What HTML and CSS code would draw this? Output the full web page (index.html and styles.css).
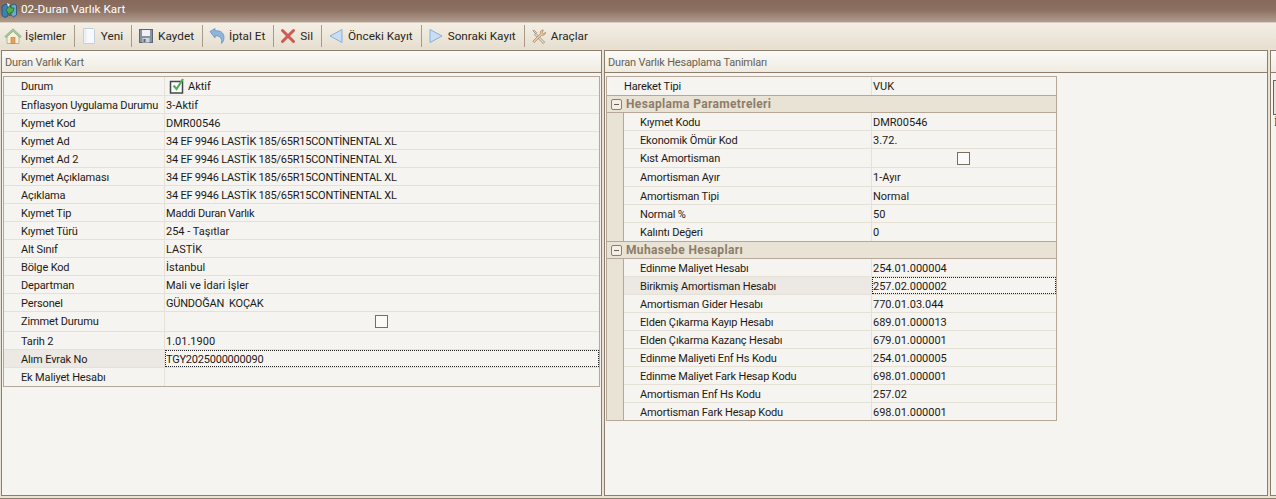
FILE: index.html
```html
<!DOCTYPE html>
<html lang="tr">
<head>
  <meta charset="UTF-8" />
  <title>02-Duran Varlık Kart</title>
  <link rel="stylesheet" href="styles.css">
</head>
<body>

  <!-- Title bar -->
  <header class="titlebar">
    <svg class="app-icon" width="16" height="16" viewBox="0 0 16 16">
      <path d="M1 4l4-2 2 2v10l-3 1.500-3-2z" fill="#3f7fb5" stroke="#24506f" stroke-width=".8" />
      <path d="M10 3l4-1 1.500 2v9l-3 2-2.500-2z" fill="#6fa8cf" stroke="#24506f" stroke-width=".8" />
      <path d="M5 8l4-5 1 3h3l-1 4-3 1v3z" fill="#4fae4a" stroke="#1f5f2a" stroke-width=".7" />
      <path d="M6 1l3 1.500L7 5z" fill="#e8f0f4" />
    </svg>
    <span>02-Duran Varlık Kart</span>
  </header>

  <!-- Toolbar -->
  <nav class="toolbar">
    <a class="tool tool-first">
      <svg width="18" height="18" viewBox="0 0 18 18">
        <path d="M3 9v7.500h12V9L9 3.500z" fill="#f6efdc" stroke="#b3b39a" />
        <path d="M.8 9.500L9 1.800l8.200 7.700-1.300 1L9 4.300 2.100 10.500z" fill="#a9cf9a" stroke="#7fa37a" stroke-width=".7" />
        <rect x="7" y="10.500" width="4" height="6" fill="#e5a257" stroke="#b97f3c" stroke-width=".6" />
      </svg>
      İşlemler
    </a>
    <a class="tool">
      <svg width="16" height="18" viewBox="0 0 16 18">
        <path d="M2.500 1.500h10l1 1v14h-11z" fill="#f7f9fc" stroke="#c3cedc" />
        <path d="M3.500 2.500h2v13h-2z" fill="#e6edf5" />
      </svg>
      Yeni
    </a>
    <a class="tool">
      <svg width="16" height="16" viewBox="0 0 16 16">
        <rect x="1.500" y="1.500" width="13" height="13" fill="#8893a1" stroke="#5c6572" />
        <rect x="4" y="2" width="8" height="6" fill="#eef1f5" />
        <rect x="4.500" y="10" width="7" height="4.500" fill="#cfd3da" />
        <rect x="5.500" y="11" width="2" height="3" fill="#5c6572" />
      </svg>
      Kaydet
    </a>
    <a class="tool">
      <svg width="16" height="18" viewBox="0 0 16 18">
        <path d="M1 4.500L6 1.500v2.300c5-.6 9 1.700 9 6.700 0 2.500-1 4.500-2.500 6 .8-4-.5-8-6.500-7.800V11z" fill="#8fb4de" stroke="#6a8fbd" stroke-width=".8" />
      </svg>
      İptal Et
    </a>
    <a class="tool">
      <svg width="16" height="16" viewBox="0 0 16 16">
        <path d="M2.500 2.500l11 11M13.500 2.500l-11 11" stroke="#cf5a50" stroke-width="3" stroke-linecap="round" />
      </svg>
      Sil
    </a>
    <a class="tool">
      <svg width="16" height="16" viewBox="0 0 16 16">
        <path d="M14 1.500v13L2 8z" fill="#c9def4" stroke="#8aafd8" stroke-linejoin="round" />
      </svg>
      Önceki Kayıt
    </a>
    <a class="tool">
      <svg width="16" height="16" viewBox="0 0 16 16">
        <path d="M2 1.500v13L14 8z" fill="#c9def4" stroke="#8aafd8" stroke-linejoin="round" />
      </svg>
      Sonraki Kayıt
    </a>
    <a class="tool tool-last">
      <svg width="16" height="17" viewBox="0 0 17 17">
        <path d="M3 1.500l3 3-1 1-3-3zM5 5l9.500 9.500-1.500 1.500L3.500 6.500z" fill="#e4ddd0" stroke="#8b8172" stroke-width=".8" />
        <path d="M13 1.500a3 3 0 0 0-3 4L2 13.500 3.500 15 11.500 7a3 3 0 0 0 4-3l-2 1.500-1.500-1z" fill="#eccba6" stroke="#a8835f" stroke-width=".8" />
      </svg>
      Araçlar
    </a>
  </nav>

  <main class="panels">

    <!-- Left panel -->
    <section class="panel panel-left">
      <h2 class="panel-head">Duran Varlık Kart</h2>
      <div class="panel-body">
        <div class="grid grid-left">
          <div class="row row-tall"><div class="lbl">Durum</div><div class="val val-check"><svg class="tick" width="16" height="16" viewBox="0 0 16 16"><rect x="1.500" y="3.500" width="12" height="11.500" fill="#fff" stroke="#3e4a46" stroke-width="1.500" /><path d="M4.500 7.500l3 3.500 6.500-10" fill="none" stroke="#4fae58" stroke-width="2.200" /></svg>Aktif</div></div>
          <div class="row"><div class="lbl">Enflasyon Uygulama Durumu</div><div class="val">3-Aktif</div></div>
          <div class="row"><div class="lbl">Kıymet Kod</div><div class="val">DMR00546</div></div>
          <div class="row"><div class="lbl">Kıymet Ad</div><div class="val val-long">34 EF 9946 LASTİK 185/65R15CONTİNENTAL XL</div></div>
          <div class="row"><div class="lbl">Kıymet Ad 2</div><div class="val val-long">34 EF 9946 LASTİK 185/65R15CONTİNENTAL XL</div></div>
          <div class="row"><div class="lbl">Kıymet Açıklaması</div><div class="val val-long">34 EF 9946 LASTİK 185/65R15CONTİNENTAL XL</div></div>
          <div class="row"><div class="lbl">Açıklama</div><div class="val val-long">34 EF 9946 LASTİK 185/65R15CONTİNENTAL XL</div></div>
          <div class="row"><div class="lbl">Kıymet Tip</div><div class="val val-long">Maddi Duran Varlık</div></div>
          <div class="row"><div class="lbl">Kıymet Türü</div><div class="val">254 - Taşıtlar</div></div>
          <div class="row"><div class="lbl">Alt Sınıf</div><div class="val">LASTİK</div></div>
          <div class="row"><div class="lbl">Bölge Kod</div><div class="val">İstanbul</div></div>
          <div class="row"><div class="lbl">Departman</div><div class="val">Mali ve İdari İşler</div></div>
          <div class="row"><div class="lbl">Personel</div><div class="val val-long">GÜNDOĞAN  KOÇAK</div></div>
          <div class="row row-check"><div class="lbl">Zimmet Durumu</div><div class="val val-box"><span class="box"></span></div></div>
          <div class="row"><div class="lbl">Tarih 2</div><div class="val">1.01.1900</div></div>
          <div class="row row-sel"><div class="lbl">Alım Evrak No</div><div class="val val-focus val-long">TGY2025000000090</div></div>
          <div class="row"><div class="lbl">Ek Maliyet Hesabı</div><div class="val"></div></div>
        </div>
      </div>
    </section>

    <!-- Right panel -->
    <section class="panel panel-right">
      <h2 class="panel-head">Duran Varlık Hesaplama Tanimları</h2>
      <div class="panel-body">
        <div class="grid grid-right">
          <div class="row"><div class="lbl">Hareket Tipi</div><div class="val">VUK</div></div>

          <div class="group-head"><span class="minus"></span>Hesaplama Parametreleri</div>
          <div class="group-rows">
            <div class="row"><div class="lbl">Kıymet Kodu</div><div class="val">DMR00546</div></div>
            <div class="row"><div class="lbl">Ekonomik Ömür Kod</div><div class="val">3.72.</div></div>
            <div class="row row-tall"><div class="lbl">Kıst Amortisman</div><div class="val val-box"><span class="box"></span></div></div>
            <div class="row row-tall"><div class="lbl">Amortisman Ayır</div><div class="val">1-Ayır</div></div>
            <div class="row"><div class="lbl">Amortisman Tipi</div><div class="val">Normal</div></div>
            <div class="row"><div class="lbl">Normal %</div><div class="val">50</div></div>
            <div class="row"><div class="lbl">Kalıntı Değeri</div><div class="val">0</div></div>
          </div>

          <div class="group-head"><span class="minus"></span>Muhasebe Hesapları</div>
          <div class="group-rows">
            <div class="row"><div class="lbl">Edinme Maliyet Hesabı</div><div class="val">254.01.000004</div></div>
            <div class="row row-sel"><div class="lbl">Birikmiş Amortisman Hesabı</div><div class="val val-focus">257.02.000002</div></div>
            <div class="row"><div class="lbl">Amortisman Gider Hesabı</div><div class="val">770.01.03.044</div></div>
            <div class="row"><div class="lbl">Elden Çıkarma Kayıp Hesabı</div><div class="val">689.01.000013</div></div>
            <div class="row"><div class="lbl">Elden Çıkarma Kazanç Hesabı</div><div class="val">679.01.000001</div></div>
            <div class="row"><div class="lbl">Edinme Maliyeti Enf Hs Kodu</div><div class="val">254.01.000005</div></div>
            <div class="row"><div class="lbl">Edinme Maliyet Fark Hesap Kodu</div><div class="val">698.01.000001</div></div>
            <div class="row"><div class="lbl">Amortisman Enf Hs Kodu</div><div class="val">257.02</div></div>
            <div class="row"><div class="lbl">Amortisman Fark Hesap Kodu</div><div class="val">698.01.000001</div></div>
          </div>
        </div>
      </div>
    </section>

    <!-- Third panel, cut off by the window edge -->
    <section class="panel panel-cut">
      <div class="panel-head"></div>
      <div class="panel-body">
        <div class="cut-box"><span class="cut-mark"></span><span class="cut-mark"></span></div>
        <div class="cut-text">İ</div>
      </div>
    </section>

  </main>

</body>
</html>
```

FILE: styles.css
```css
* {
  box-sizing: border-box;
}

html, body {
  height: 100%;
}

body {
  margin: 0;
  overflow: hidden;
  font-family: Roboto, sans-serif;
  font-size: 11px;
  color: #1d1a16;
  background-color: #e9e3d5;
}

.titlebar {
  display: flex;
  align-items: flex-start;
  gap: 4px;
  height: 23px;
  padding-left: 1px;
  color: #fff;
  font-size: 11.750px;
  line-height: 19px;
  background: linear-gradient(to bottom, #86695a 0%, #8c7061 45%, #b09c8d 100%);
  border-bottom: 1px solid #d8cfc2;
}

.app-icon {
  margin-top: 2px;
}

.toolbar {
  display: flex;
  align-items: center;
  height: 26px;
  padding-left: 4px;
  background: linear-gradient(to bottom, #f4efe5, #e6dfd0);
}

.tool {
  display: flex;
  align-items: center;
  gap: 4px;
  height: 22px;
  padding: 0 8px 0 6px;
  font-size: 11.750px;
  color: #2a2620;
  border-right: 1px solid #a89a88;
}

.tool-first {
  gap: 3px;
  padding-left: 0;
  font-size: 11.500px;
}

.tool-last {
  border-right: none;
}

.panels {
  display: flex;
  gap: 2px;
  height: 450px;
  padding: 1px 0 0 1px;
  border-bottom: 1px solid #8d7d6d;
}

.panel {
  display: flex;
  flex-direction: column;
  height: 446px;
  border: 1px solid #8d7d6d;
  background-color: #f6f4f0;
}

.panel-left {
  width: 601px;
}

.panel-right {
  width: 664px;
}

.panel-cut {
  flex: 1;
  overflow: hidden;
  border-right: none;
}

.panel-head {
  flex: none;
  height: 22px;
  margin: 0;
  padding: 4px 0 0 3px;
  font-size: 11px;
  line-height: 16px;
  font-weight: normal;
  letter-spacing: -0.2px;
  color: #6a5f52;
  background: linear-gradient(to bottom, #fbfaf7, #efebe2);
  border-bottom: 1px solid #8d7d6d;
}

.panel-body {
  flex: 1;
  padding: 3px 0 0 1px;
}

.grid {
  border: 1px solid #b5a898;
}

.grid-left {
  width: 597px;
}

.grid-right {
  width: 451px;
  background-color: #e9e3d5;
}

.row {
  display: flex;
  height: 18px;
  border-bottom: 1px solid #e6e1d6;
}

.row:last-child {
  border-bottom: none;
}

.row-tall {
  height: 19px;
}

.row-check {
  height: 20px;
}

.lbl {
  flex: none;
  width: 161px;
  padding: 2px 0 0 17px;
  line-height: 15px;
  letter-spacing: -0.15px;
  white-space: nowrap;
  border-right: 1px solid #e6e1d6;
}

.val {
  flex: 1;
  padding: 2px 0 0 1px;
  line-height: 15px;
  white-space: pre;
}

.val-long {
  letter-spacing: -0.22px;
}

.val-check {
  display: flex;
  align-items: center;
  gap: 3px;
  padding: 0 0 0 4px;
}

.val-box {
  display: flex;
  align-items: center;
  justify-content: center;
  padding: 0 2px 0 0;
}

.box {
  width: 13px;
  height: 13px;
  background-color: #fbfaf8;
  border: 1px solid #77705f;
}

.row-sel .lbl {
  background-color: #ece9e4;
}

.val-focus {
  outline: 1px dotted #222;
  outline-offset: -1px;
  background-color: #f6f4f0;
}

.grid-right .lbl {
  width: 265px;
}

.grid-right .group-rows .lbl {
  width: 248px;
  padding-left: 16px;
}

.grid-right > .row {
  background-color: #f6f4f0;
  border-bottom: none;
}

.group-head {
  display: flex;
  align-items: center;
  gap: 4px;
  height: 18px;
  padding-left: 4px;
  font-size: 12px;
  font-weight: bold;
  letter-spacing: 0.35px;
  color: #8d7d6a;
  background-color: #e9e3d5;
  border-top: 1px solid #b5a898;
  border-bottom: 1px solid #b5a898;
}

.minus {
  position: relative;
  width: 11px;
  height: 11px;
  border: 1px solid #8d7d6a;
  border-radius: 2px;
  background-color: #f3efe6;
}

.minus::after {
  content: "";
  position: absolute;
  left: 2px;
  top: 4px;
  width: 5px;
  height: 1px;
  background-color: #6a5f52;
}

.group-rows {
  margin-left: 16px;
  border-left: 1px solid #b5a898;
  background-color: #f6f4f0;
}

.group-rows:last-child .row:last-child {
  height: 17px;
}

.cut-box {
  display: flex;
  flex-direction: column;
  gap: 6px;
  width: 8px;
  height: 35px;
  margin: 4px 0 0 1px;
  padding: 5px 0 0 2px;
  background-color: #e9e3d5;
  border: 1px solid #6f6356;
  border-right: none;
}

.cut-mark {
  width: 3px;
  height: 8px;
  background-color: #2b2a4c;
}

.cut-text {
  padding-left: 2px;
  font-family: "Liberation Serif", serif;
  font-size: 12px;
  line-height: 14px;
}
```
